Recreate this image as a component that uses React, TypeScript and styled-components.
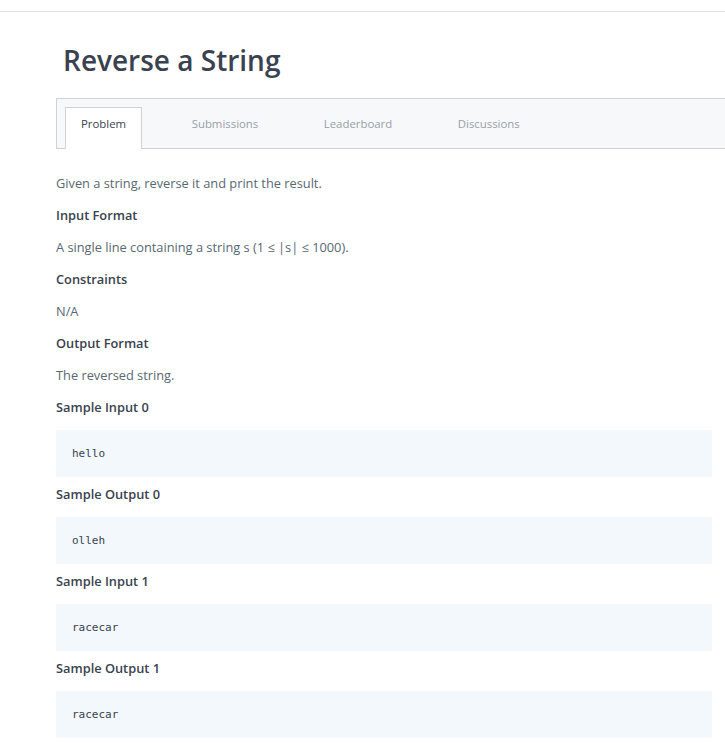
import styled, { createGlobalStyle } from "styled-components"

const GlobalStyle = createGlobalStyle`
body {
    margin: 0;
    background: #fff;
    font-family: "Open Sans", "Liberation Sans", sans-serif;
}
`

const TopBar = styled.div`
height: 11px;
border-bottom: 1px solid #e3e3e3;
`

const Title = styled.h1`
margin: 0;
padding: 28px 0 18px 63px;
height: 86px;
box-sizing: border-box;
font-size: 28px;
line-height: 40px;
font-weight: 600;
color: #39424e;
`

const TabBar = styled.div`
display: flex;
margin: 0 0 0 56px;
padding: 8px 0 0 8px;
height: 51px;
box-sizing: border-box;
background: #f7f8f9;
border: 1px solid #cfd2d6;
border-right: none;
`

const Tab = styled.div<{ active?: boolean }>`
display: flex;
align-items: center;
padding: 0 15px 10px;
margin-right: 33.5px;
margin-bottom: -1px;
font-size: 11.4px;
color: ${p => p.active ? "#39424e" : "#979fa8"};
background: ${p => p.active ? "#fff" : "transparent"};
border: 1px solid ${p => p.active ? "#cfd2d6" : "transparent"};
border-bottom: none;
`

const Content = styled.div`
padding: 18px 13px 0 56px;
`

const Text = styled.p`
margin: 0;
font-size: 12.8px;
line-height: 32px;
color: #576871;
`

const Heading = styled.h3`
margin: 0;
font-size: 12.8px;
line-height: 32px;
font-weight: 600;
color: #39424e;
`

const CodeBlock = styled.pre`
margin: 7px 0 1px;
height: 47px;
padding: 0 16px;
display: flex;
align-items: center;
background: #f3f8fd;
font-family: "DejaVu Sans Mono", "Liberation Mono", monospace;
font-size: 11px;
color: #39424e;
`

const samples = [
    { label: "Sample Input 0", code: "hello" },
    { label: "Sample Output 0", code: "olleh" },
    { label: "Sample Input 1", code: "racecar" },
    { label: "Sample Output 1", code: "racecar" },
]

const App = () => {
    return (
        <>
            <GlobalStyle />
            <TopBar />
            <Title>Reverse a String</Title>
            <TabBar>
                <Tab active>Problem</Tab>
                <Tab>Submissions</Tab>
                <Tab>Leaderboard</Tab>
                <Tab>Discussions</Tab>
            </TabBar>
            <Content>
                <Text>Given a string, reverse it and print the result.</Text>
                <Heading>Input Format</Heading>
                <Text>A single line containing a string s (1 ≤ |s| ≤ 1000).</Text>
                <Heading>Constraints</Heading>
                <Text>N/A</Text>
                <Heading>Output Format</Heading>
                <Text>The reversed string.</Text>
                {samples.map(s => (
                    <div key={s.label}>
                        <Heading>{s.label}</Heading>
                        <CodeBlock>{s.code}</CodeBlock>
                    </div>
                ))}
            </Content>
        </>
    )
}

export default App
